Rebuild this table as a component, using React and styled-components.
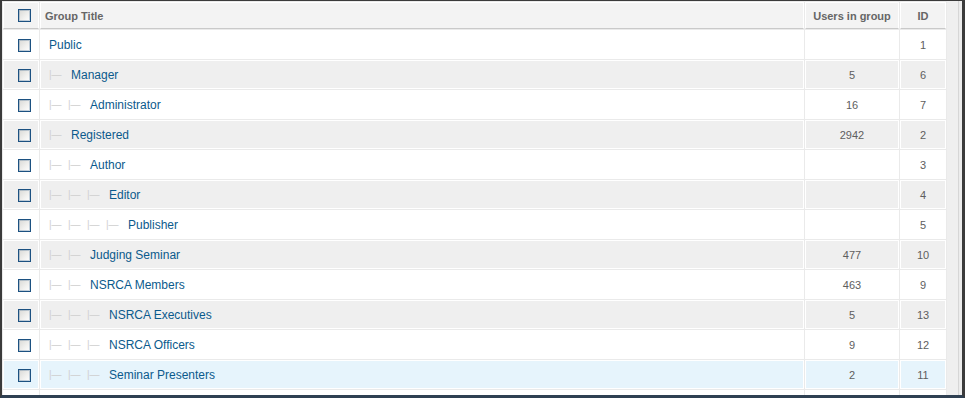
import React from 'react';
import styled, { createGlobalStyle } from 'styled-components';

const groups = [
  { id: 1, title: 'Public', level: 0, users: '' },
  { id: 6, title: 'Manager', level: 1, users: 5 },
  { id: 7, title: 'Administrator', level: 2, users: 16 },
  { id: 2, title: 'Registered', level: 1, users: 2942 },
  { id: 3, title: 'Author', level: 2, users: '' },
  { id: 4, title: 'Editor', level: 3, users: '' },
  { id: 5, title: 'Publisher', level: 4, users: '' },
  { id: 10, title: 'Judging Seminar', level: 2, users: 477 },
  { id: 9, title: 'NSRCA Members', level: 2, users: 463 },
  { id: 13, title: 'NSRCA Executives', level: 3, users: 5 },
  { id: 12, title: 'NSRCA Officers', level: 3, users: 9 },
  { id: 11, title: 'Seminar Presenters', level: 3, users: 2, hover: true },
];

const GlobalStyle = createGlobalStyle`
  html, body {
    margin: 0;
    padding: 0;
    background: #fff;
  }
  body {
    font-family: "Liberation Sans", Arial, sans-serif;
  }
`;

const App = () => {
  return (
    <>
      <GlobalStyle />
      <Frame>
        <TableArea>
          <AdminList>
            <thead>
              <tr>
                <HeadCell $w={36} $pad="0 0 0 14px" $align="left"><Check /></HeadCell>
                <HeadCell $w={764} $pad="0 0 0 4px" $align="left">Group Title</HeadCell>
                <HeadCell $w={94}>Users in group</HeadCell>
                <HeadCell $w={46}>ID</HeadCell>
              </tr>
            </thead>
            <tbody>
              {groups.map((g, i) => (
                <Row key={g.id} $alt={i % 2 === 1} $hover={g.hover}>
                  <CheckCell><Check /></CheckCell>
                  <TitleCell>
                    {Array.from({ length: g.level }).map((_, n) => (
                      <Gi key={n}>|&mdash;</Gi>
                    ))}
                    <GroupLink href="#" $level={g.level}>{g.title}</GroupLink>
                  </TitleCell>
                  <NumCell>{g.users}</NumCell>
                  <NumCell>{g.id}</NumCell>
                </Row>
              ))}
              {/* next row starts just under the fold */}
              <Row>
                <CheckCell />
                <TitleCell />
                <NumCell />
                <NumCell />
              </Row>
            </tbody>
          </AdminList>
        </TableArea>
        <ScrollStrip>
          <StripLine />
        </ScrollStrip>
      </Frame>
    </>
  );
};

const Frame = styled.div`
  box-sizing: border-box;
  width: 965px;
  height: 398px;
  display: flex;
  overflow: hidden;
  border-left: 2px solid #3b3b3b;
  border-top: 1px solid #3b3b3b;
  border-right: 3px solid #3b3b3b;
  border-bottom: 3px solid #2f4052;
  background: #f3f3f3;
`;

const TableArea = styled.div`
  width: 945px;
  flex: none;
  overflow: hidden;
`;

const ScrollStrip = styled.div`
  flex: 1;
  display: flex;
  justify-content: flex-end;
  background: #efefef;
`;

const StripLine = styled.div`
  width: 3px;
  border-left: 1px solid #d6d6d6;
  background: #ececec;
`;

const AdminList = styled.table`
  width: 945px;
  table-layout: fixed;
  border-collapse: separate;
  border-spacing: 1px;
  background: #eaeaea;
  color: #666;
`;

const HeadCell = styled.th`
  box-sizing: border-box;
  width: ${p => p.$w}px;
  height: 27px;
  padding: ${p => p.$pad || '0'};
  text-align: ${p => p.$align || 'center'};
  vertical-align: middle;
  background: #f3f3f3;
  border: 1px solid #fff;
  border-bottom: 1px solid #c9c9c9;
  font-size: 11px;
  font-weight: bold;
  color: #666;
  white-space: nowrap;
`;

const Row = styled.tr`
  td {
    background: ${p => (p.$hover ? '#e6f4fc' : p.$alt ? '#efefef' : '#fff')};
  }
`;

const Cell = styled.td`
  box-sizing: border-box;
  height: 29px;
  padding: 0;
  vertical-align: middle;
  border: 1px solid #fff;
  white-space: nowrap;
`;

const CheckCell = styled(Cell)`
  padding-left: 14px;
`;

const TitleCell = styled(Cell)`
  padding-left: 8px;
  font-size: 12px;
`;

const NumCell = styled(Cell)`
  text-align: center;
  font-size: 11px;
  color: #5e5e5e;
`;

const Check = styled.span`
  display: inline-block;
  box-sizing: border-box;
  width: 13px;
  height: 13px;
  vertical-align: middle;
  border: 1px solid #1c5181;
  box-shadow: inset 0 0 0 1px rgba(28, 81, 129, 0.25);
  background: linear-gradient(135deg, #d9d9d6 0%, #f1f1ef 60%, #fff 100%);
`;

const Gi = styled.span`
  display: inline-block;
  width: 19px;
  font-size: 10px;
  color: #cfcfcf;
  vertical-align: middle;
`;

const GroupLink = styled.a`
  margin-left: ${p => (p.$level ? 3 : 0)}px;
  color: #0b5a8c;
  text-decoration: none;
  vertical-align: middle;
`;

export default App;
